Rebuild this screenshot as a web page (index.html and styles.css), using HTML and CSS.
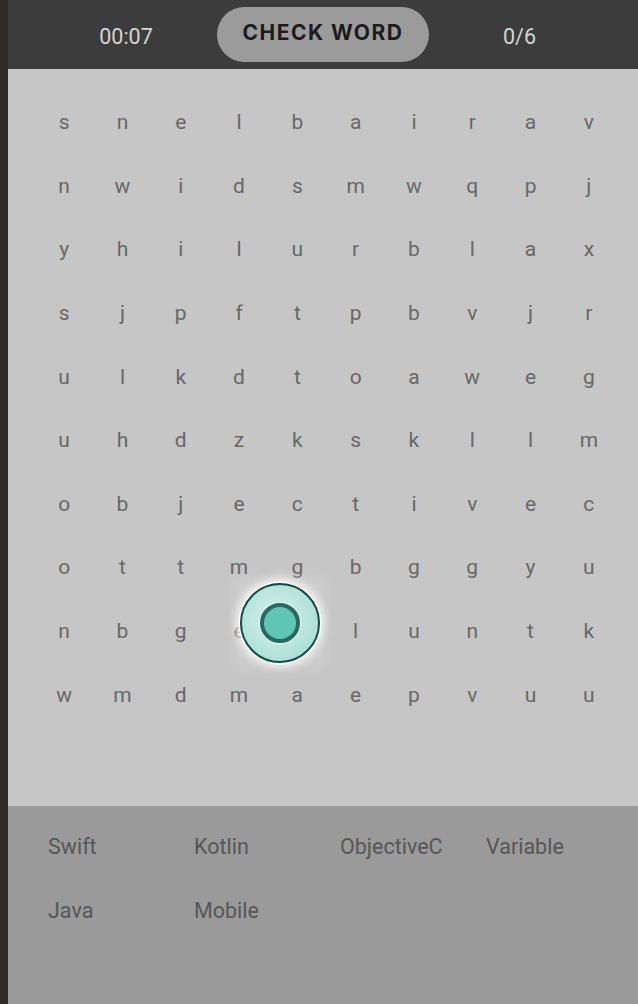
FILE: index.html
```html
<!DOCTYPE html>
<html>
<head>
<meta charset="utf-8">
<link rel="stylesheet" href="styles.css">
</head>
<body>
<div class="app">
  <div class="edge"></div>
  <div class="main">
    <header class="topbar">
      <div class="timer">00:07</div>
      <button class="check">CHECK WORD</button>
      <div class="score">0/6</div>
    </header>
    <section class="board">
      <div class="grid">
        <span>s</span><span>n</span><span>e</span><span>l</span><span>b</span><span>a</span><span>i</span><span>r</span><span>a</span><span>v</span>
        <span>n</span><span>w</span><span>i</span><span>d</span><span>s</span><span>m</span><span>w</span><span>q</span><span>p</span><span>j</span>
        <span>y</span><span>h</span><span>i</span><span>l</span><span>u</span><span>r</span><span>b</span><span>l</span><span>a</span><span>x</span>
        <span>s</span><span>j</span><span>p</span><span>f</span><span>t</span><span>p</span><span>b</span><span>v</span><span>j</span><span>r</span>
        <span>u</span><span>l</span><span>k</span><span>d</span><span>t</span><span>o</span><span>a</span><span>w</span><span>e</span><span>g</span>
        <span>u</span><span>h</span><span>d</span><span>z</span><span>k</span><span>s</span><span>k</span><span>l</span><span>l</span><span>m</span>
        <span>o</span><span>b</span><span>j</span><span>e</span><span>c</span><span>t</span><span>i</span><span>v</span><span>e</span><span>c</span>
        <span>o</span><span>t</span><span>t</span><span>m</span><span>g</span><span>b</span><span>g</span><span>g</span><span>y</span><span>u</span>
        <span>n</span><span>b</span><span>g</span><span>e</span><span>b</span><span>l</span><span>u</span><span>n</span><span>t</span><span>k</span>
        <span>w</span><span>m</span><span>d</span><span>m</span><span>a</span><span>e</span><span>p</span><span>v</span><span>u</span><span>u</span>
      </div>
      <div class="glow"></div>
      <div class="cursor"><div class="cursor-inner"></div></div>
    </section>
    <section class="words">
      <span>Swift</span><span>Kotlin</span><span>ObjectiveC</span><span>Variable</span>
      <span>Java</span><span>Mobile</span>
    </section>
  </div>
</div>
</body>
</html>
```
FILE: styles.css
```css
* { box-sizing: border-box; }
html, body { margin: 0; padding: 0; }
body {
  width: 638px;
  height: 1004px;
  overflow: hidden;
  font-family: Roboto, "Liberation Sans", sans-serif;
  background: #9a9a9a;
}
.app {
  display: flex;
  height: 1004px;
}
.edge {
  width: 8px;
  flex: none;
  background: #2e2c2b;
}
.main {
  flex: 1;
  display: flex;
  flex-direction: column;
}
.topbar {
  height: 69px;
  background: #3c3c3c;
  display: grid;
  grid-template-columns: 209px 212px 1fr;
  align-items: center;
}
.timer {
  padding-left: 27px;
  text-align: center;
  color: #d4d4d4;
  font-size: 21.5px;
  padding-top: 3px;
}
.score {
  padding-right: 28px;
  text-align: center;
  color: #d4d4d4;
  font-size: 21.5px;
  padding-top: 3px;
}
.check {
  height: 55px;
  border: none;
  border-radius: 28px;
  background: #9b9b9b;
  color: #1c1c1c;
  font-family: Inter, "Open Sans", sans-serif;
  font-weight: 700;
  font-size: 21px;
  letter-spacing: 1.5px;
  padding: 0 0 4px;
}
.board {
  position: relative;
  height: 737px;
  background: #c6c6c6;
  padding: 21px 20px 0 27px;
}
.grid {
  display: grid;
  grid-template-columns: repeat(10, 1fr);
  grid-auto-rows: 63.6px;
}
.grid span {
  display: flex;
  align-items: center;
  justify-content: center;
  color: #686868;
  font-size: 21px;
  padding-top: 1px;
}
.glow {
  position: absolute;
  left: 226px;
  top: 508px;
  width: 92px;
  height: 92px;
  background: rgba(255,255,255,0.12);
  filter: blur(4px);
}
.cursor {
  position: absolute;
  left: 232px;
  top: 514px;
  width: 80px;
  height: 80px;
  border-radius: 50%;
  border: 2.5px solid #0f4d45;
  background: radial-gradient(circle at 45% 45%, #d6f1eb 0%, #bde7de 45%, #9fd8cb 100%);
  box-shadow: 0 0 0 1.5px #ffffff, 0 0 10px 4px rgba(255,255,255,0.85);
  display: flex;
  align-items: center;
  justify-content: center;
}
.cursor-inner {
  width: 40px;
  height: 40px;
  border-radius: 50%;
  border: 4px solid #2a6960;
  background: #5fc6b6;
  box-shadow: 0 0 0 1px rgba(255,255,255,0.6);
}
.words {
  flex: 1;
  background: #9a9a9a;
  display: grid;
  grid-template-columns: repeat(4, 146px);
  grid-auto-rows: 64px;
  padding: 8px 0 0 40px;
  align-content: start;
}
.words span {
  display: flex;
  align-items: center;
  color: #565656;
  font-size: 21.5px;
}
```
